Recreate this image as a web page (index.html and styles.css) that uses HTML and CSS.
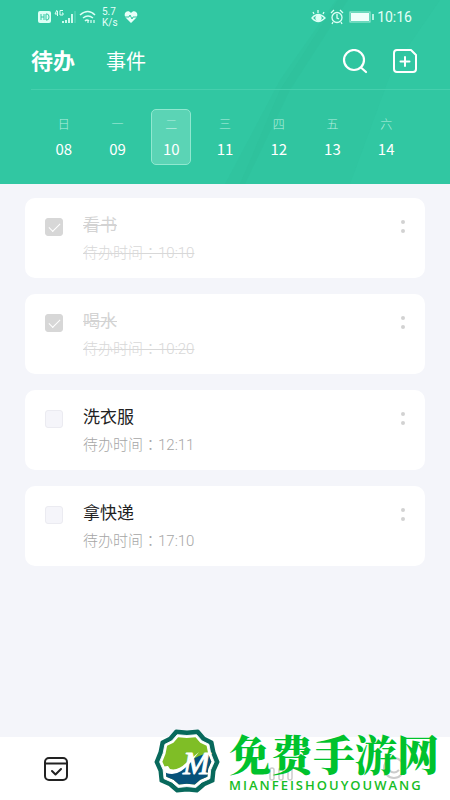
FILE: index.html
```html
<!DOCTYPE html>
<html lang="zh-CN">
<head>
<meta charset="utf-8">
<meta name="viewport" content="width=device-width, initial-scale=1">
<title>待办</title>
<link rel="stylesheet" href="styles.css">
</head>
<body>
<div class="app">
  <header class="header">
    <svg class="rays" viewBox="0 0 450 184" preserveAspectRatio="none" aria-hidden="true">
      <path d="M338 0H440L392 70 350 184H240L280 90Z" fill="#2bbb95" opacity=".14"/>
      <path d="M336 0H348L290 90 245 184H225L280 80Z" fill="#2bb18e" opacity=".1"/>
    </svg>
    <div class="status">
      <div class="status-left">
        <svg width="64" height="18" viewBox="0 0 64 18" fill="none" stroke="#dcfff5">
          <rect x="0" y="3" width="13" height="12" rx="2" fill="#dcfff5" stroke="none"/>
          <path d="M3 6v6M6 6v6M3 9h3M8 6v6h1q2 0 2-3t-2-3z" stroke="#31c7a2"/>
          <path d="M19 2l-2 4h3M19.500 3v5M25 2.500h-3v4.500h3V5h-1" stroke-width="1"/>
          <path d="M25 15v-2M28 15v-3M31 15v-5M34 15V6" stroke-width="1.800"/>
          <path d="M37 15V3" stroke-width="1" opacity=".35"/>
          <path d="M42 7q8-7 15 0M45 10q5-4 10 0M47 13q2-2 4 0" stroke-width="1.500"/>
          <path d="M50 12v3M53 12v3M56 12v3" stroke-width="1.200"/>
        </svg>
        <span class="speed">5.7<br>K/s</span>
        <svg class="heart" width="14" height="14" viewBox="0 0 14 14"><path d="M7 13L2 8C-2 3 4-1 7 3c3-4 9 0 5 5z" fill="#e8fff9"/><path d="M1 7h4l1-2 2 4 1-2h4" fill="none" stroke="#31c7a2"/></svg>
      </div>
      <div class="status-right">
        <svg width="64" height="16" viewBox="0 0 64 16" fill="none" stroke="#dcfff5" stroke-width="1.300">
          <path d="M1 9q6-7 13 0-7 7-13 0zM3 5L2 3M7 4V1M12 5l1-2"/><circle cx="7.500" cy="9" r="2.500" fill="#dcfff5"/>
          <circle cx="26" cy="8.500" r="5"/><path d="M26 5v4l2 1M20 4l3-3M32 4l-3-3M22 13l-1 2M30 13l1 2"/>
          <rect x="39" y="3" width="20" height="10" stroke-width="1" opacity=".7"/><rect x="40" y="4" width="18" height="8" fill="#effffb" stroke="none"/><path d="M62 5v6" stroke-width="1.500"/>
        </svg>
        <span class="clock">10:16</span>
      </div>
    </div>
    <div class="toolbar">
      <nav class="tabs">
        <button class="tab tab-on" type="button">待办</button>
        <button class="tab" type="button">事件</button>
      </nav>
      <div class="tools">
        <button class="tool" type="button" aria-label="搜索"><svg width="26" height="26" viewBox="0 0 26 26" fill="none" stroke="#fff" stroke-width="2.200" stroke-linecap="round"><circle cx="12" cy="10" r="10" transform="translate(0 1)"/><path d="M19.500 19l4.500 4"/></svg></button>
        <button class="tool" type="button" aria-label="新建"><svg width="26" height="26" viewBox="0 0 26 26" fill="none" stroke="#fff" stroke-width="2" stroke-linecap="round" stroke-linejoin="round"><path d="M5 1h14l5 5v14q0 3-3 3H5q-3 0-3-3V4q0-3 3-3zM13 8v9M8.500 12.500h9"/></svg></button>
      </div>
    </div>
    <div class="week">
      <button class="day" type="button"><span>日</span><b>08</b></button>
      <button class="day" type="button"><span>一</span><b>09</b></button>
      <button class="day day-on" type="button"><span>二</span><b>10</b></button>
      <button class="day" type="button"><span>三</span><b>11</b></button>
      <button class="day" type="button"><span>四</span><b>12</b></button>
      <button class="day" type="button"><span>五</span><b>13</b></button>
      <button class="day" type="button"><span>六</span><b>14</b></button>
    </div>
  </header>
  <main class="list">
    <article class="card done">
      <input class="check" type="checkbox" id="t1" checked>
      <div class="body"><label class="title" for="t1">看书</label><p class="time" lang="zh-TW">待办时间：10:10</p></div>
      <button class="more" type="button" aria-label="更多"><i></i><i></i></button>
    </article>
    <article class="card done">
      <input class="check" type="checkbox" id="t2" checked>
      <div class="body"><label class="title" for="t2">喝水</label><p class="time" lang="zh-TW">待办时间：10:20</p></div>
      <button class="more" type="button" aria-label="更多"><i></i><i></i></button>
    </article>
    <article class="card">
      <input class="check" type="checkbox" id="t3">
      <div class="body"><label class="title" for="t3">洗衣服</label><p class="time" lang="zh-TW">待办时间：12:11</p></div>
      <button class="more" type="button" aria-label="更多"><i></i><i></i></button>
    </article>
    <article class="card">
      <input class="check" type="checkbox" id="t4">
      <div class="body"><label class="title" for="t4">拿快递</label><p class="time" lang="zh-TW">待办时间：17:10</p></div>
      <button class="more" type="button" aria-label="更多"><i></i><i></i></button>
    </article>
  </main>
  <footer class="bottom">
    <nav class="nav">
      <button class="nav-item" type="button" aria-label="待办"><svg width="26" height="26" viewBox="0 0 26 26" fill="none" stroke="#222" stroke-width="2" stroke-linecap="round" stroke-linejoin="round"><rect x="2" y="2" width="22" height="22" rx="4"/><path d="M2 7.500h22M9 15l3.500 3.500L18 13"/></svg></button>
      <button class="nav-item" type="button" aria-label="日历"></button>
      <button class="nav-item" type="button" aria-label="统计"><svg width="26" height="26" viewBox="0 0 26 26" fill="none" stroke="#ccc" stroke-width="1.500"><rect x="2" y="12" width="4" height="12" rx="2"/><rect x="11" y="12" width="4" height="12" rx="2"/><rect x="20" y="11" width="4" height="13" rx="2"/></svg></button>
      <button class="nav-item" type="button" aria-label="我的"><svg width="26" height="26" viewBox="0 0 26 26" fill="none" stroke="#ccc" stroke-width="2"><circle cx="13" cy="12" r="10"/><path d="M8 14q5 5 10 0"/></svg></button>
    </nav>
    <div class="brand">
      <svg class="emblem" width="68" height="65" viewBox="0 0 68 65" stroke-linejoin="round" aria-hidden="true">
        <defs>
          <path id="badge" d="M23 2L34 3 45 2 51 9 59 13 61 23 65 33 61 42 60 52 51 56 44 62 34 61 24 62 17 56 8 52 7 42 3 33 7 23 9 13 17 9Z"/>
          <clipPath id="inside"><use href="#badge" transform="translate(7 6.600) scale(.79)"/></clipPath>
        </defs>
        <use href="#badge" fill="#08695c" stroke="#08695c" stroke-width="3"/>
        <use href="#badge" fill="#fff" stroke="#fff" stroke-width="1" transform="translate(4 3.900) scale(.88)"/>
        <g clip-path="url(#inside)">
          <path d="M0 0h68v65H0z" fill="#7fbe26"/>
          <path d="M8 43Q25 46 34 34Q46 24 68 22V65H8Z" fill="#07527a"/>
        </g>
        <path d="M11 42Q8 37 15 37L17 40Q25 42 33 34L46 23 38 33Q28 45 19 45Q13 45 11 42Z" fill="#fff"/>
        <text class="monogram" x="30" y="45">M</text>
      </svg>
      <div class="brand-text"><strong>免费手游网</strong><span>MIANFEISHOUYOUWANG</span></div>
    </div>
  </footer>
</div>
</body>
</html>
```
FILE: styles.css
```css
* { box-sizing: border-box; }
body {
  margin: 0;
  background: #f4f5fa;
  font-family: Roboto, "Noto Sans CJK SC", sans-serif;
}
button {
  padding: 0;
  border: 0;
  background: none;
  color: inherit;
  font: inherit;
}
svg { display: block; }
.app { display: flex; flex-direction: column; min-height: 100vh; }

.header { position: relative; background: #31c7a2; color: #fff; padding-bottom: 19px; }
.rays { position: absolute; inset: 0; width: 100%; height: 100%; }
.status, .toolbar, .week { position: relative; }
.status {
  display: flex;
  justify-content: space-between;
  align-items: center;
  height: 34px;
  padding: 0 38px;
  color: #e4fff8;
}
.status-left, .status-right { display: flex; align-items: center; }
.status-left svg { flex: none; }
.speed { font-size: 10px; line-height: 11px; }
.heart { margin-left: 6px; }
.clock { font-size: 14px; line-height: 16px; margin-left: 2px; }
.toolbar {
  display: flex;
  justify-content: space-between;
  align-items: center;
  height: 56px;
  margin-left: 31px;
  padding-right: 32px;
  border-bottom: 1px solid #46cfad;
}
.tabs { display: flex; align-items: center; gap: 31px; }
.tab { font-size: 20px; line-height: 30px; }
.tab-on { font-size: 22px; font-weight: 700; }
.tools { display: flex; gap: 24px; }
.week {
  display: grid;
  grid-template-columns: repeat(7, 1fr);
  justify-items: center;
  padding: 19px 37px 0;
}
.day {
  display: flex;
  flex-direction: column;
  align-items: center;
  gap: 5px;
  width: 40px;
  height: 56px;
  padding-top: 5px;
  border: 1px solid transparent;
  border-radius: 5px;
  font-family: "Noto Sans CJK SC", sans-serif;
}
.day span { font-size: 12px; line-height: 18px; font-weight: 300; color: #b4eedf; }
.day b { font-size: 15px; line-height: 22px; font-weight: 400; }
.day-on { background: #5bd4b5; border-color: #90e8d0; }

.list {
  flex: 1;
  display: flex;
  flex-direction: column;
  gap: 16px;
  padding: 14px 25px;
}
.card {
  display: flex;
  align-items: flex-start;
  min-height: 80px;
  padding: 14px 17px 12px 20px;
  border-radius: 10px;
  background: #fff;
}
.check {
  appearance: none;
  display: grid;
  place-items: center;
  flex: none;
  width: 18px;
  height: 18px;
  margin: 6px 20px 0 0;
  border: 1px solid #ebebf1;
  border-radius: 3px;
  background: #f5f5fa;
}
.check:checked { background: #d7d7d7; border-color: #d7d7d7; }
.check:checked::before {
  content: "";
  width: 10px;
  height: 5px;
  margin-bottom: 3px;
  border: solid #fff;
  border-width: 0 0 1px 1px;
  transform: rotate(-45deg);
}
.body { flex: 1; }
.title { display: block; font-size: 17px; line-height: 26px; color: #222; }
.time {
  margin: 4px 0 0;
  font-family: Roboto, "Noto Sans CJK TC", sans-serif;
  font-size: 15px;
  line-height: 22px;
  font-weight: 300;
  color: #a6a6a6;
}
.done .title { color: #d3d3d3; text-decoration: line-through; }
.done .time { color: #d8d8d8; text-decoration: line-through; }
.more { display: flex; flex-direction: column; gap: 5px; padding: 8px 3px; }
.more i { width: 4px; height: 4px; border-radius: 50%; background: #d2d2d2; }

.bottom { position: relative; background: #fff; }
.nav { display: grid; grid-template-columns: repeat(4, 1fr); height: 63px; }
.nav-item { display: grid; place-items: center; }
.brand { position: absolute; right: 11px; bottom: 6px; display: flex; align-items: flex-end; gap: 8px; }
.monogram { font: italic 400 32px "Liberation Serif", serif; fill: #fff; stroke: #fff; stroke-width: 1px; }
.brand-text { display: flex; flex-direction: column; color: #00c22d; }
.brand-text strong { font: 900 42px/48px "Noto Serif CJK SC", "Noto Sans CJK SC", serif; }
.brand-text span { font: 600 13px/17px "Open Sans", sans-serif; letter-spacing: 2px; color: #17bd25; white-space: nowrap; }
```
